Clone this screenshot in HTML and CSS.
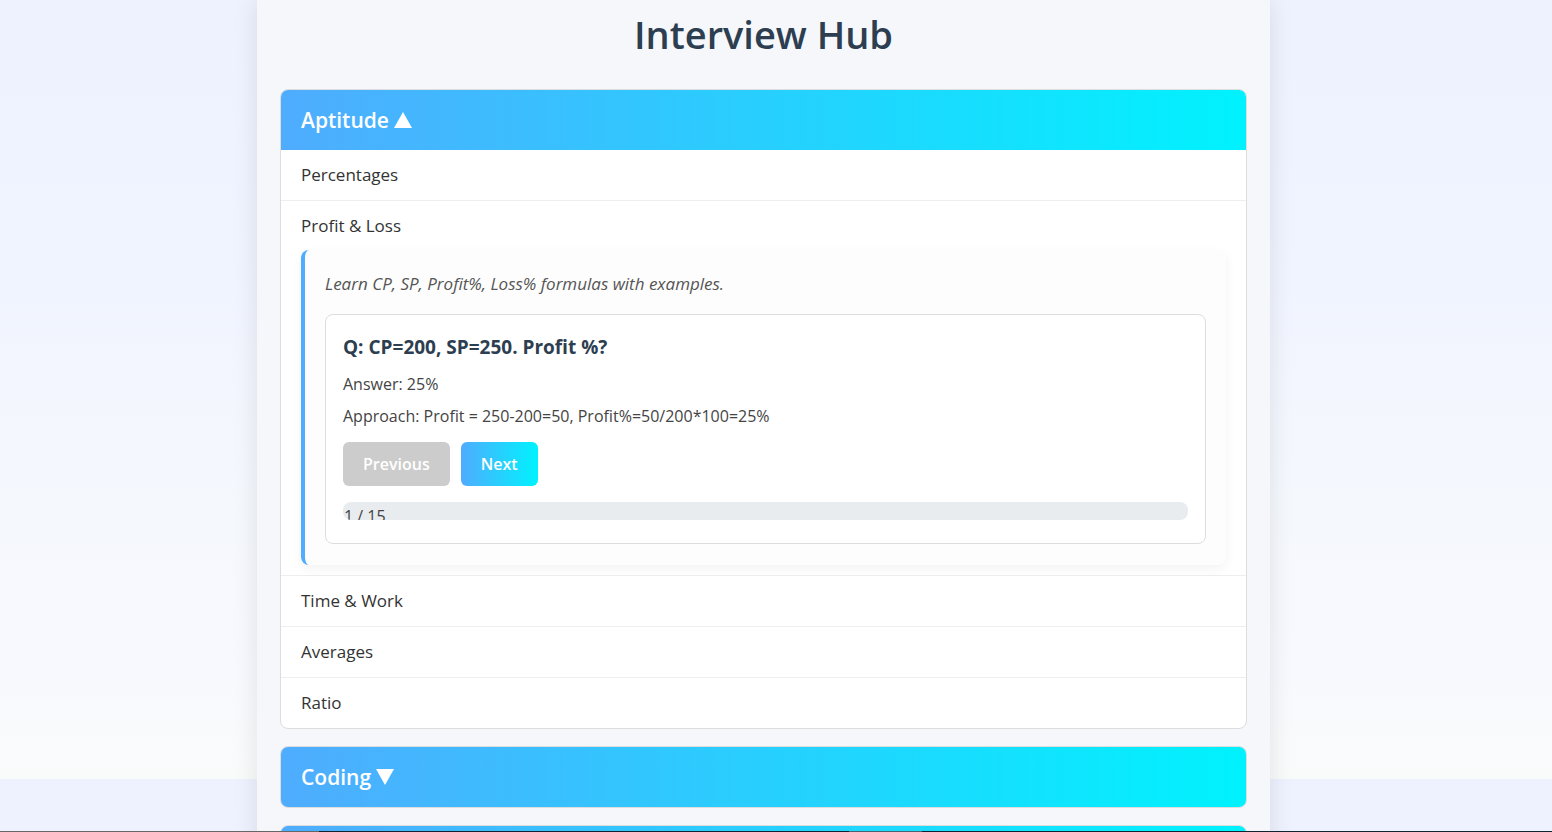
FILE: index.html
```html
<!DOCTYPE html>
<html lang="en">
<head>
<meta charset="utf-8">
<meta name="viewport" content="width=device-width, initial-scale=1">
<title>Interview Hub</title>
<link rel="stylesheet" href="styles.css">
</head>
<body>
<div class="page">
  <main class="hub">
    <h1 class="hub-title">Interview Hub</h1>
    <section class="category">
      <button class="category-header" type="button" aria-expanded="true">Aptitude
        <svg class="arrow" viewBox="0 0 18 16" aria-hidden="true"><path d="M9 0 18 16H0z"/></svg>
      </button>
      <ul class="topics">
        <li class="topic">Percentages</li>
        <li class="topic">Profit &amp; Loss
          <div class="panel">
            <p class="panel-intro">Learn CP, SP, Profit%, Loss% formulas with examples.</p>
            <article class="question">
              <h2 class="question-title">Q: CP=200, SP=250. Profit %?</h2>
              <p class="question-text">Answer: 25%</p>
              <p class="question-text">Approach: Profit = 250-200=50, Profit%=50/200*100=25%</p>
              <div class="actions">
                <button class="btn" type="button" disabled>Previous</button>
                <button class="btn" type="button">Next</button>
              </div>
              <div class="progress">1 / 15</div>
            </article>
          </div>
        </li>
        <li class="topic">Time &amp; Work</li>
        <li class="topic">Averages</li>
        <li class="topic">Ratio</li>
      </ul>
    </section>
    <section class="category">
      <button class="category-header" type="button" aria-expanded="false">Coding
        <svg class="arrow" viewBox="0 0 18 16" aria-hidden="true"><path d="M0 0h18L9 16z"/></svg>
      </button>
    </section>
    <section class="category">
      <button class="category-header" type="button" aria-expanded="false" aria-label="More topics"></button>
    </section>
  </main>
</div>
<div class="edge"></div>
</body>
</html>
```
FILE: styles.css
```css
* {
  box-sizing: border-box;
}

body {
  margin: 0;
  height: 100vh;
  display: flex;
  flex-direction: column;
  overflow: hidden;
  font-family: "Segoe UI", "Open Sans", "Noto Sans", sans-serif;
  font-size: 16px;
  color: #333;
}

h1, h2, p, ul {
  margin: 0;
  padding: 0;
  font-weight: inherit;
}

.page {
  flex: 1;
  min-height: 0;
  overflow: hidden;
  padding: 0 25px 0 0;
  background: linear-gradient(#eef2ff, #f0f4ff 35%, #f5f8fd 65%, #f8f9fe 85%, #f9fbfb) 0 0 / 100% 779px;
}

.hub {
  max-width: 1013px;
  min-height: 100%;
  margin: 0 auto;
  padding: 4px 23px 24px;
  background: #f5f7fb;
  box-shadow: 0 0 24px rgba(0, 0, 0, 0.1);
}

.hub-title {
  margin-bottom: 25px;
  font-size: 38px;
  line-height: 60px;
  font-weight: 600;
  text-align: center;
  color: #2c3e50;
}

.category {
  margin-bottom: 17px;
  border: 1px solid #ddd;
  border-radius: 8px;
  background: #fff;
  overflow: hidden;
}

.category-header {
  display: flex;
  align-items: center;
  gap: 5px;
  width: 100%;
  min-height: 60px;
  padding: 0 20px;
  border: 0;
  background: linear-gradient(90deg, #4facfe, #00f2fe);
  color: #fff;
  font: inherit;
  font-size: 21px;
  line-height: 60px;
  font-weight: 600;
}

.arrow {
  width: 18px;
  height: 16px;
  fill: #fff;
}

.topics {
  list-style: none;
}

.topic {
  padding: 10px 20px;
  border-bottom: 1px solid #eee;
  font-size: 17px;
  line-height: 30px;
}

.topic:last-child {
  border-bottom: 0;
}

.panel {
  margin-top: 9px;
  padding: 20px 20px 21px;
  border-left: 4px solid #4facfe;
  border-radius: 8px;
  background: #fdfdfd;
  box-shadow: 0 4px 12px rgba(0, 0, 0, 0.05);
}

.panel-intro {
  margin-bottom: 16px;
  font-style: italic;
  line-height: 28px;
  color: #555;
}

.question {
  padding: 17px 17px 23px;
  border: 1px solid #ddd;
  border-radius: 8px;
  background: #fff;
}

.question-title {
  margin-bottom: 8px;
  font-size: 19px;
  line-height: 30px;
  font-weight: 700;
  color: #2c3e50;
}

.question-text {
  margin-bottom: 4px;
  font-size: 16px;
  line-height: 28px;
  color: #444;
}

.actions {
  display: flex;
  gap: 11px;
  margin: 12px 0 16px;
}

.btn {
  padding: 0 20px;
  border: 0;
  border-radius: 6px;
  background: linear-gradient(90deg, #4facfe, #00f2fe);
  color: #fff;
  font: inherit;
  font-size: 16px;
  line-height: 44px;
  font-weight: 600;
}

.btn:disabled {
  background: #ccc;
}

.progress {
  height: 18px;
  padding-left: 1px;
  border-radius: 8px;
  background: #e9ecef;
  overflow: hidden;
  font-size: 16px;
  line-height: 28px;
  color: #444;
}

.edge {
  height: 1px;
  background: linear-gradient(90deg, #666 0 319px, #12222e 319px 849px, #47636e 849px 922px, #12222e 922px);
}
```
